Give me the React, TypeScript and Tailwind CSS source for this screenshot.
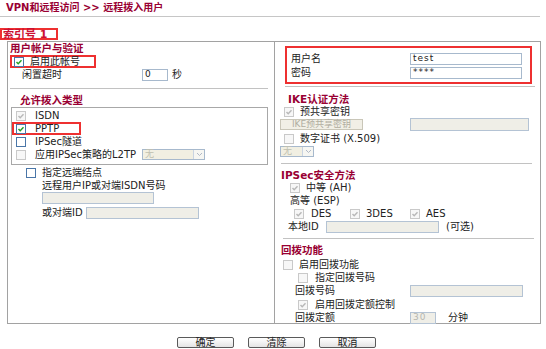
import type { ReactNode } from 'react'

type CheckKind = 'on' | 'onDim' | 'off' | 'offDim'

const FONT = "font-['DejaVu_Sans','Noto_Sans_CJK_SC',sans-serif]"

export default function App() {
  return (
    <div className={`h-[349px] w-[546px] overflow-hidden bg-white text-[10px] leading-none text-[#222] ${FONT}`}>
      <div className="flex h-[17px] w-[540px] items-center border-b border-[#c6c6c6] pb-[1px] pl-[6px] font-bold text-[#990033]">
        VPN和远程访问 &gt;&gt; 远程拨入用户
      </div>
      <div className="mt-[11px] flex h-[12px] w-[58px] items-center border-2 border-[#ee3030] pl-[1px] text-[11px] font-bold text-[#cc1133]">
        索引号 1
      </div>
      <div className="ml-[7px] mt-[1px] grid h-[283px] w-[534px] grid-cols-[267px_1fr] border border-[#a2a2a2]">
        <LeftColumn />
        <RightColumn />
      </div>
      <div className="mt-[13px] flex gap-[14px] pl-[177px]">
        <FormButton label="确定" />
        <FormButton label="清除" />
        <FormButton label="取消" />
      </div>
    </div>
  )
}

function LeftColumn() {
  return (
    <div className="flex flex-col border-r border-[#a2a2a2]">
      <Heading className="pl-[2px]">用户帐户与验证</Heading>
      <div className="ml-[2px] mt-[1px] flex h-[13px] w-[86px] items-center border-2 border-[#ee3030] pl-[2px]">
        <Check kind="on" />
        <span className="ml-[6px]">启用此帐号</span>
      </div>
      <Row className="pl-[14px]">
        <span className="w-[120px]">闲置超时</span>
        <Field className="w-[26px]" value="0" />
        <span className="ml-[4px]">秒</span>
      </Row>
      <Rule className="ml-[2px] mt-[7px] w-[258px]" />
      <Heading className="mt-[4px] pl-[12px]">允许拨入类型</Heading>
      <div className="ml-[3px] mt-[1px] flex h-[58px] w-[257px] flex-col border border-[#a8a8a8] pt-[1px]">
        <Row className="pl-[4px]">
          <Check kind="onDim" />
          <span className="ml-[9px]">ISDN</span>
        </Row>
        <div className="flex h-[13px] w-[69px] items-center border-2 border-[#ee3030] pl-[2px]">
          <Check kind="on" />
          <span className="ml-[9px]">PPTP</span>
        </div>
        <Row className="pl-[4px]">
          <Check kind="off" />
          <span className="ml-[9px]">IPSec隧道</span>
        </Row>
        <Row className="pl-[4px]">
          <Check kind="offDim" />
          <span className="ml-[9px] w-[107px] whitespace-nowrap">应用IPSec策略的L2TP</span>
          <Select className="w-[63px]" value="无" />
        </Row>
      </div>
      <Row className="mt-[1px] pl-[18px]">
        <Check kind="off" />
        <span className="ml-[6px]">指定远端结点</span>
      </Row>
      <Row className="pl-[34px]">远程用户IP或对端ISDN号码</Row>
      <div className="pl-[34px]">
        <Field className="w-[112px]" dim />
      </div>
      <Row className="mt-[2px] pl-[34px]">
        <span className="w-[44px]">或对端ID</span>
        <Field className="w-[113px]" dim />
      </Row>
    </div>
  )
}

function RightColumn() {
  return (
    <div className="flex flex-col">
      <div className="ml-[10px] mt-[4px] flex h-[38px] w-[247px] flex-col gap-[1px] border-2 border-[#ee3030] pl-[4px] pt-[4px]">
        <Row>
          <span className="w-[119px]">用户名</span>
          <Field className="w-[112px]" value="test" />
        </Row>
        <Row>
          <span className="w-[119px]">密码</span>
          <Field className="w-[112px]" value="****" />
        </Row>
      </div>
      <Rule className="ml-[10px] mt-[2px] w-[250px]" />
      <Heading className="mt-[5px] pl-[13px]">IKE认证方法</Heading>
      <Row className="pl-[9px]">
        <Check kind="onDim" />
        <span className="ml-[6px]">预共享密钥</span>
      </Row>
      <Row className="pl-[5px]">
        <div className="flex h-[11px] w-[83px] items-center justify-center border border-[#c9c6b8] bg-[#f1efe6] text-[9px] text-[#b0ada0]">
          IKE预共享密钥
        </div>
        <Field className="ml-[47px] h-[13px] w-[119px]" dim />
      </Row>
      <Row className="mt-[1px] pl-[9px]">
        <Check kind="offDim" />
        <span className="ml-[6px]">数字证书 (X.509)</span>
      </Row>
      <div className="mt-[1px] pl-[5px]">
        <Select className="w-[34px]" value="无" />
      </div>
      <Rule className="ml-[6px] mt-[6px] w-[251px]" />
      <Heading className="mt-[4px] pl-[6px]">IPSec安全方法</Heading>
      <Row className="pl-[15px]">
        <Check kind="onDim" />
        <span className="ml-[6px]">中等 (AH)</span>
      </Row>
      <Row className="pl-[15px]">高等 (ESP)</Row>
      <Row className="pl-[19px]">
        <span className="flex w-[56px] items-center">
          <Check kind="onDim" />
          <span className="ml-[7px]">DES</span>
        </span>
        <span className="flex w-[60px] items-center">
          <Check kind="onDim" />
          <span className="ml-[6px]">3DES</span>
        </span>
        <span className="flex items-center">
          <Check kind="onDim" />
          <span className="ml-[6px]">AES</span>
        </span>
      </Row>
      <Row className="pl-[13px]">
        <span className="w-[38px]">本地ID</span>
        <Field className="h-[11px] w-[113px]" dim />
        <span className="ml-[7px]">(可选)</span>
      </Row>
      <Rule className="ml-[8px] mt-[5px] w-[251px]" />
      <Heading className="mt-[4px] pl-[6px]">回拨功能</Heading>
      <Row className="mt-[2px] pl-[8px]">
        <Check kind="offDim" />
        <span className="ml-[6px]">启用回拨功能</span>
      </Row>
      <Row className="pl-[23px]">
        <Check kind="offDim" />
        <span className="ml-[7px]">指定回拨号码</span>
      </Row>
      <Row className="pl-[20px]">
        <span className="w-[115px]">回拨号码</span>
        <Field className="w-[113px]" dim />
      </Row>
      <Row className="mt-[1px] pl-[23px]">
        <Check kind="onDim" />
        <span className="ml-[7px]">启用回拨定额控制</span>
      </Row>
      <Row className="pl-[20px]">
        <span className="w-[115px]">回拨定额</span>
        <Field className="h-[11px] w-[26px]" value="30" dim />
        <span className="ml-[12px]">分钟</span>
      </Row>
    </div>
  )
}

function Heading({ children, className = '' }: { children: ReactNode; className?: string }) {
  return <div className={`flex h-[12px] items-center text-[10.5px] font-bold text-[#990033] ${className}`}>{children}</div>
}

function Row({ children, className = '' }: { children: ReactNode; className?: string }) {
  return <div className={`flex h-[13px] items-center whitespace-nowrap ${className}`}>{children}</div>
}

function Rule({ className = '' }: { className?: string }) {
  return <div className={`h-[2px] border-t border-[#c2c2c2] border-b-white ${className}`} />
}

function Check({ kind }: { kind: CheckKind }) {
  const box =
    kind === 'on' ? 'border-[#4a76a8] bg-white'
    : kind === 'off' ? 'border-[#4a76a8] bg-white'
    : 'border-[#c9c9c9] bg-[#f7f7f7]'
  const tick = kind === 'on' ? '#22a022' : '#b8b8b8'
  return (
    <span className={`flex h-[10px] w-[10px] shrink-0 items-center justify-center border ${box}`}>
      {(kind === 'on' || kind === 'onDim') && (
        <svg width="8" height="8" viewBox="0 0 8 8" aria-hidden="true">
          <polyline points="1.5,4 3.2,5.8 6.5,2.2" fill="none" stroke={tick} strokeWidth="1.4" />
        </svg>
      )}
    </span>
  )
}

function Field({ className = '', value, dim }: { className?: string; value?: string; dim?: boolean }) {
  const tone = dim ? 'border-[#b4c3d4] bg-[#efeee7] text-[#b6b6b0]' : 'border-[#a7b9cd] bg-white text-[#222]'
  return (
    <span className={`flex h-[12px] shrink-0 items-center border pl-[2px] text-[9px] tracking-[1px] ${tone} ${className}`}>
      {value}
    </span>
  )
}

function Select({ className = '', value }: { className?: string; value: string }) {
  return (
    <span className={`flex h-[11px] items-center justify-between border border-[#a7b9cd] bg-[#f1efe2] pl-[2px] text-[9px] text-[#c0bfb0] ${className}`}>
      {value}
      <span className="flex h-full w-[11px] items-center justify-center border-l border-[#c9d4e2] bg-[#f6f6f2]">
        <svg width="7" height="5" viewBox="0 0 7 5" aria-hidden="true">
          <polyline points="1,1 3.5,3.5 6,1" fill="none" stroke="#b0b8c6" strokeWidth="1" />
        </svg>
      </span>
    </span>
  )
}

function FormButton({ label }: { label: string }) {
  return (
    <button className="flex h-[11px] w-[57px] items-center justify-center rounded-[2px] border border-[#5a5a5a] bg-gradient-to-b from-white to-[#e4e4e4] text-[10px] leading-none text-[#222]">
      {label}
    </button>
  )
}
